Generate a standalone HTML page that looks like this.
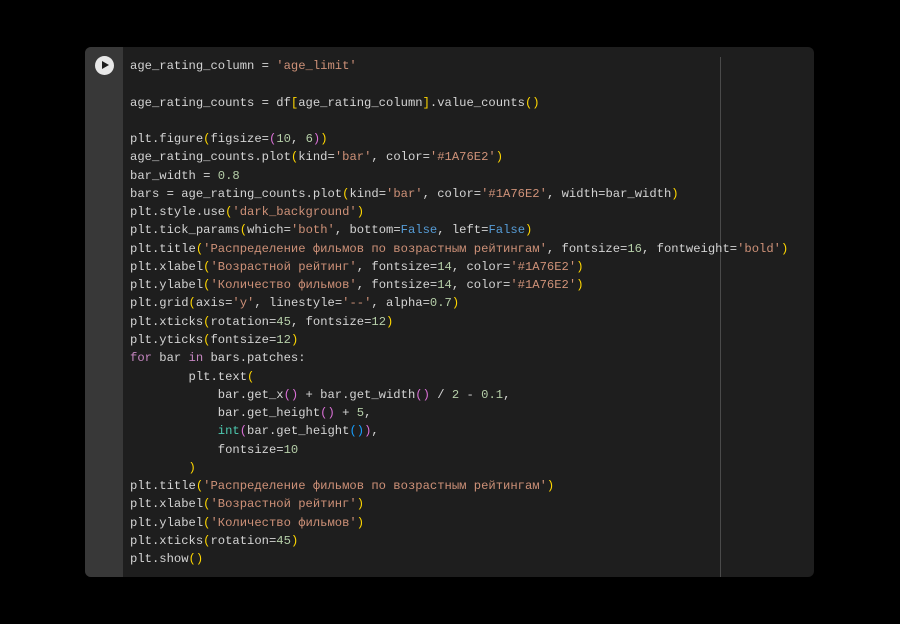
<!DOCTYPE html>
<html><head><meta charset="utf-8"><style>
html,body{margin:0;padding:0;background:#000;width:900px;height:624px;overflow:hidden}
.cell{position:absolute;left:85px;top:47px;width:729px;height:530px;background:#1e1e1e;border-radius:6px;overflow:hidden}
.gut{position:absolute;left:0;top:0;width:38px;height:530px;background:#383838}
.play{position:absolute;left:10px;top:9px;width:19px;height:19px;border-radius:50%;background:#e8e8e8}
.play:after{content:"";position:absolute;left:7px;top:5px;border-left:7px solid #1e1e1e;border-top:4.5px solid transparent;border-bottom:4.5px solid transparent}
.vl{position:absolute;left:635px;top:10px;width:1px;height:520px;background:#4a4a4a}
pre{position:absolute;left:45px;top:10px;margin:0;font-family:"Liberation Mono",monospace;font-size:12.2px;line-height:18.27px;color:#d4d4d4}
.s{color:#ce9178}.n{color:#b5cea8}.k{color:#c586c0}.t{color:#4ec9b0}.b{color:#569cd6}
.p1{color:#ffd700}.p2{color:#da70d6}.p3{color:#179fff}
</style></head><body>
<div class="cell"><div class="gut"><div class="play"></div></div><div class="vl"></div>
<pre>age_rating_column = <span class="s">'age_limit'</span>

age_rating_counts = df<span class="p1">[</span>age_rating_column<span class="p1">]</span>.value_counts<span class="p1">()</span>

plt.figure<span class="p1">(</span>figsize=<span class="p2">(</span><span class="n">10</span>, <span class="n">6</span><span class="p2">)</span><span class="p1">)</span>
age_rating_counts.plot<span class="p1">(</span>kind=<span class="s">'bar'</span>, color=<span class="s">'#1A76E2'</span><span class="p1">)</span>
bar_width = <span class="n">0.8</span>
bars = age_rating_counts.plot<span class="p1">(</span>kind=<span class="s">'bar'</span>, color=<span class="s">'#1A76E2'</span>, width=bar_width<span class="p1">)</span>
plt.style.use<span class="p1">(</span><span class="s">'dark_background'</span><span class="p1">)</span>
plt.tick_params<span class="p1">(</span>which=<span class="s">'both'</span>, bottom=<span class="b">False</span>, left=<span class="b">False</span><span class="p1">)</span>
plt.title<span class="p1">(</span><span class="s">'Распределение фильмов по возрастным рейтингам'</span>, fontsize=<span class="n">16</span>, fontweight=<span class="s">'bold'</span><span class="p1">)</span>
plt.xlabel<span class="p1">(</span><span class="s">'Возрастной рейтинг'</span>, fontsize=<span class="n">14</span>, color=<span class="s">'#1A76E2'</span><span class="p1">)</span>
plt.ylabel<span class="p1">(</span><span class="s">'Количество фильмов'</span>, fontsize=<span class="n">14</span>, color=<span class="s">'#1A76E2'</span><span class="p1">)</span>
plt.grid<span class="p1">(</span>axis=<span class="s">'y'</span>, linestyle=<span class="s">'--'</span>, alpha=<span class="n">0.7</span><span class="p1">)</span>
plt.xticks<span class="p1">(</span>rotation=<span class="n">45</span>, fontsize=<span class="n">12</span><span class="p1">)</span>
plt.yticks<span class="p1">(</span>fontsize=<span class="n">12</span><span class="p1">)</span>
<span class="k">for</span> bar <span class="k">in</span> bars.patches:
        plt.text<span class="p1">(</span>
            bar.get_x<span class="p2">()</span> + bar.get_width<span class="p2">()</span> / <span class="n">2</span> - <span class="n">0.1</span>,
            bar.get_height<span class="p2">()</span> + <span class="n">5</span>,
            <span class="t">int</span><span class="p2">(</span>bar.get_height<span class="p3">()</span><span class="p2">)</span>,
            fontsize=<span class="n">10</span>
        <span class="p1">)</span>
plt.title<span class="p1">(</span><span class="s">'Распределение фильмов по возрастным рейтингам'</span><span class="p1">)</span>
plt.xlabel<span class="p1">(</span><span class="s">'Возрастной рейтинг'</span><span class="p1">)</span>
plt.ylabel<span class="p1">(</span><span class="s">'Количество фильмов'</span><span class="p1">)</span>
plt.xticks<span class="p1">(</span>rotation=<span class="n">45</span><span class="p1">)</span>
plt.show<span class="p1">()</span></pre>
</div>
</body></html>
